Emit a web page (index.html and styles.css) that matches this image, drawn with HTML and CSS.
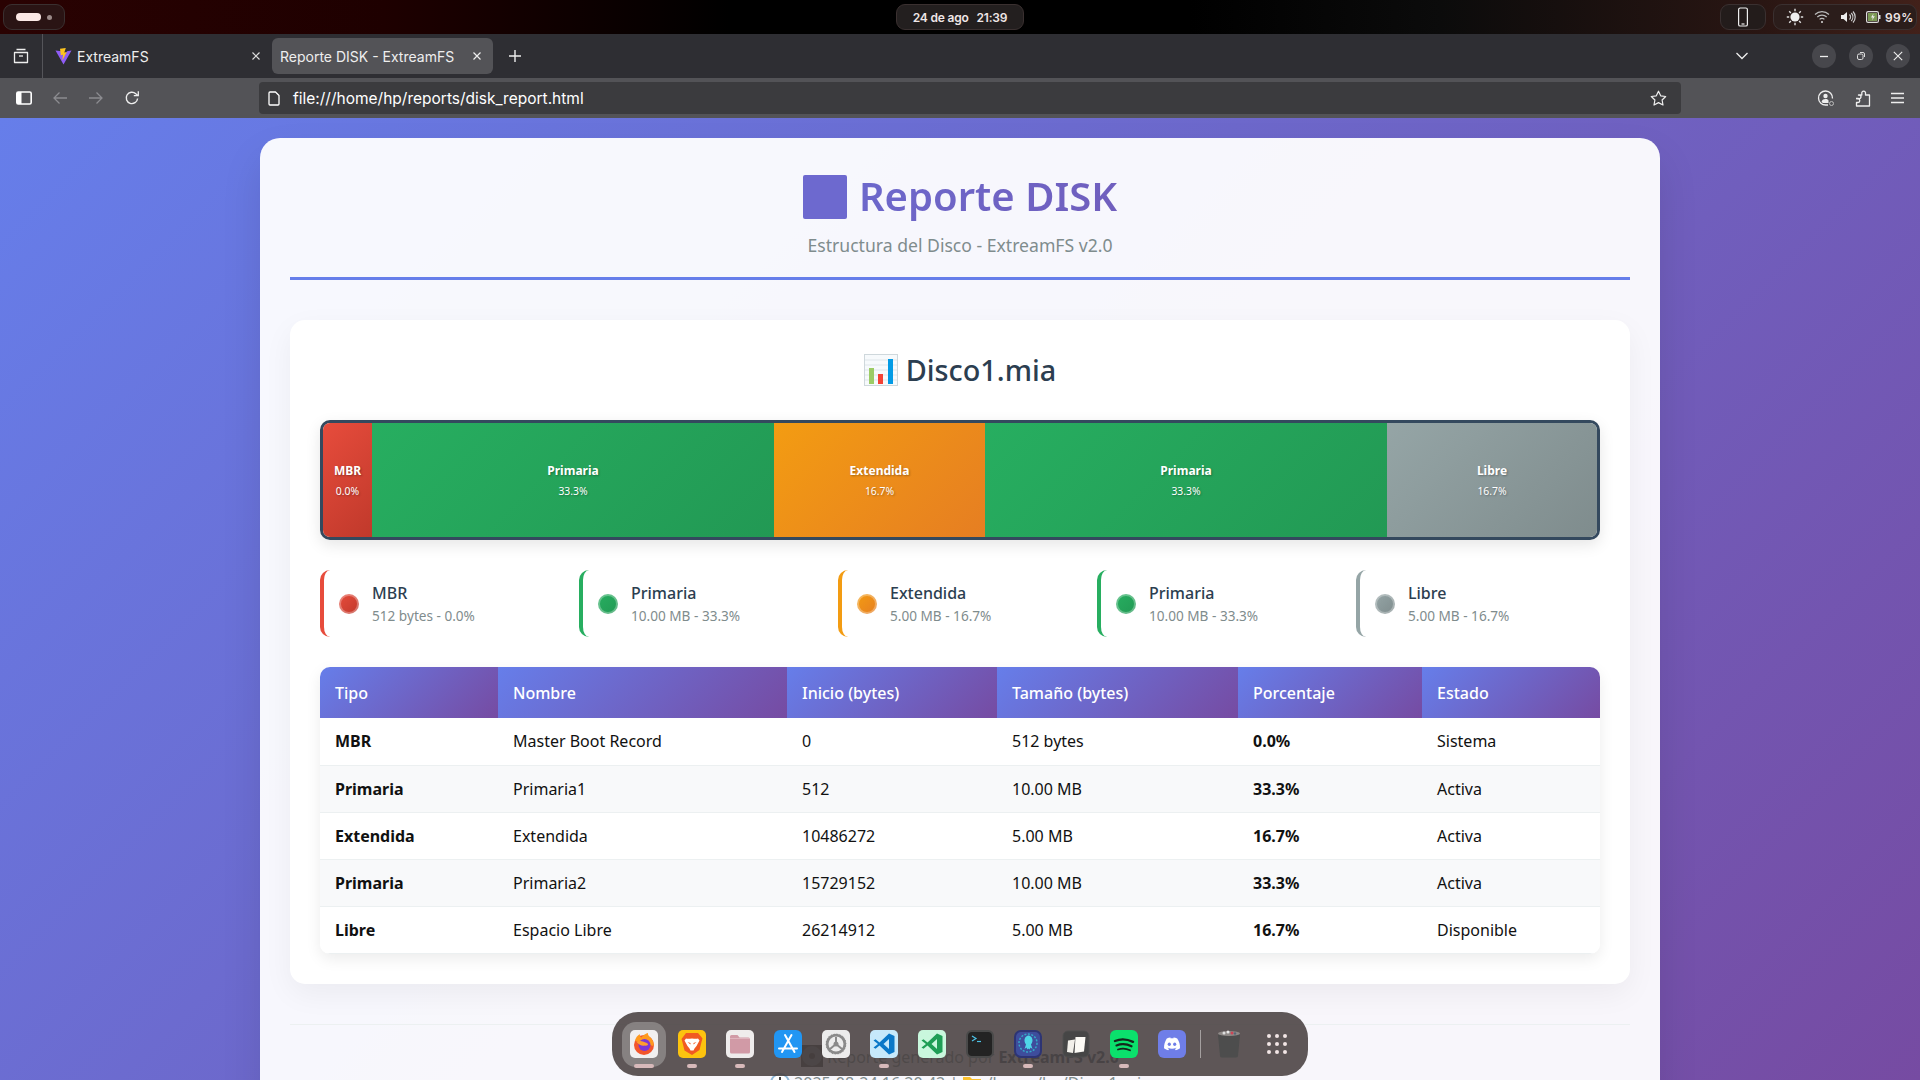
FILE: index.html
```html
<!DOCTYPE html>
<html lang="es">
<head>
<meta charset="utf-8">
<title>Reporte DISK - ExtreamFS</title>
<link rel="stylesheet" href="styles.css">
</head>
<body>
<div class="screen">
  <header class="topbar">
    <div class="pill pill-work"><span class="work-active"></span><span class="work-dot"></span></div>
    <div class="pill pill-clock"><span>24 de ago</span><span>21:39</span></div>
    <div class="top-right">
      <div class="pill pill-phone">
        <svg width="12" height="20" viewBox="0 0 12 20" fill="none" stroke="#eee" stroke-width="1.2"><rect x="1.6" y="1" width="8.8" height="18" rx="1.6"/><path d="M4.5 17h3"/></svg>
      </div>
      <div class="pill pill-status">
        <svg width="18" height="18" viewBox="0 0 18 18"><circle cx="9" cy="9" r="4.6" fill="#eee"/><g stroke="#ddd" stroke-width="1.4"><path d="M9 .8v2.4M9 14.8v2.4M.8 9h2.4M14.8 9h2.4M3.2 3.2l1.7 1.7M13.1 13.1l1.7 1.7M3.2 14.8l1.7-1.7M13.1 4.9l1.7-1.7"/></g></svg>
        <svg width="16" height="14" viewBox="0 0 16 14" fill="none" stroke="#bbb" stroke-width="1.2"><path d="M1 4.5a10 10 0 0 1 14 0M3.3 7a6.6 6.6 0 0 1 9.4 0M5.6 9.4a3.2 3.2 0 0 1 4.8 0"/><circle cx="8" cy="12" r="1" fill="#ddd" stroke="none"/></svg>
        <svg width="16" height="14" viewBox="0 0 16 14" fill="none" stroke="#ccc" stroke-width="1.2"><path d="M1 5h2.5L7 2v10L3.500 9H1z" fill="#eee" stroke="none"/><path d="M9.500 4.500a3.500 3.500 0 0 1 0 5M11.300 3a6 6 0 0 1 0 8M13 1.500a8 8 0 0 1 0 11"/></svg>
        <svg width="15" height="12" viewBox="0 0 15 12"><rect x=".6" y=".6" width="11.800" height="10.800" rx="1.500" fill="none" stroke="#ddd" stroke-width="1.200"/><rect x="2" y="2" width="9" height="8" fill="#7c9a55"/><path d="M7.500 2.500 5 6.500h1.800L6 9.500l2.800-4.200H7z" fill="#eee"/><rect x="13" y="4" width="1.500" height="4" fill="#ddd"/></svg>
        <span class="battery-text">99%</span>
      </div>
    </div>
  </header>

  <div class="tabbar">
    <button class="tb-btn tab-view">
      <svg width="16" height="16" viewBox="0 0 16 16" fill="none" stroke="#eee" stroke-width="1.300"><path d="M3.500 1.500h9M1.500 4.500h13v10h-13z" stroke-linejoin="round"/><path d="M6 8h4"/></svg>
    </button>
    <div class="tab">
      <svg class="favicon" width="17" height="17" viewBox="0 0 17 17"><path d="M.5 2.500 8.500 16.500 16.500 2.500 12 3.300 8.500 9 6.500 3.300z" fill="#8f5cf6"/><path d="M5 .8 10.800 0 9.300 4.500l2.500-.6L7.300 12.500 8 6.800 5.800 7.200z" fill="#fdc41f"/></svg>
      <span class="tab-title">ExtreamFS</span>
      <svg class="tab-x" width="10" height="10" viewBox="0 0 10 10" stroke="#ddd" stroke-width="1.200"><path d="M1.500 1.500l7 7M8.500 1.500l-7 7"/></svg>
    </div>
    <div class="tab tab-active">
      <span class="tab-title">Reporte DISK - ExtreamFS</span>
      <svg class="tab-x" width="10" height="10" viewBox="0 0 10 10" stroke="#eee" stroke-width="1.200"><path d="M1.500 1.500l7 7M8.500 1.500l-7 7"/></svg>
    </div>
    <svg class="tab-new" width="14" height="14" viewBox="0 0 14 14" stroke="#eee" stroke-width="1.400"><path d="M7 1v12M1 7h12"/></svg>
    <div class="tabbar-right">
      <svg class="chevron" width="14" height="8" viewBox="0 0 14 8" fill="none" stroke="#eee" stroke-width="1.300"><path d="M1.500 1 7 6.500 12.500 1"/></svg>
      <span class="win-btn"><svg width="10" height="10" viewBox="0 0 10 10" stroke="#eee" stroke-width="1.300"><path d="M1 5.500h8"/></svg></span>
      <span class="win-btn"><svg width="10" height="10" viewBox="0 0 10 10" fill="none" stroke="#ddd"><rect x="1.500" y="3" width="5.500" height="5.500" rx="1.500"/><path d="M4 1.500h3a1.500 1.500 0 0 1 1.500 1.500v3"/></svg></span>
      <span class="win-btn"><svg width="10" height="10" viewBox="0 0 10 10" stroke="#eee" stroke-width="1.100"><path d="M.8.800l8.400 8.400M9.200.800.800 9.200"/></svg></span>
    </div>
  </div>

  <nav class="toolbar">
    <svg class="tool-side" width="16" height="14" viewBox="0 0 16 14"><rect x=".8" y="1" width="14.400" height="12" rx="1.500" fill="none" stroke="#fff" stroke-width="1.600"/><rect x="1" y="1" width="4.500" height="12" fill="#fff"/></svg>
    <svg class="tool-back" width="16" height="14" viewBox="0 0 16 14" fill="none" stroke="#8c8c90" stroke-width="1.300"><path d="M15 7H2M7.500 1.500 2 7l5.500 5.500"/></svg>
    <svg class="tool-fwd" width="16" height="14" viewBox="0 0 16 14" fill="none" stroke="#8c8c90" stroke-width="1.300"><path d="M1 7h13M8.500 1.500 14 7l-5.500 5.500"/></svg>
    <svg class="tool-reload" width="16" height="16" viewBox="0 0 16 16" fill="none" stroke="#eee" stroke-width="1.400"><path d="M13.600 8.500A5.700 5.700 0 1 1 11.800 3.700L14 5.500"/><path d="M14.300 1.200v4.500H9.800" stroke-width="1.300"/></svg>
    <div class="urlbar">
      <svg width="12" height="15" viewBox="0 0 12 15" fill="none" stroke="#fff" stroke-width="1.300"><path d="M1 2a1 1 0 0 1 1-1h5.500L11 4.500V13a1 1 0 0 1-1 1H2a1 1 0 0 1-1-1z" stroke-linejoin="round"/></svg>
      <span class="url-text">file:///home/hp/reports/disk_report.html</span>
      <svg class="url-star" width="17" height="16" viewBox="0 0 17 16" fill="none" stroke="#eee" stroke-width="1.200"><path d="M8.500 1.200 10.700 5.800l5 .7-3.600 3.500.9 5-4.500-2.400L4 15l.9-5L1.300 6.500l5-.7z" stroke-linejoin="round"/></svg>
    </div>
    <div class="toolbar-right">
      <svg width="18" height="18" viewBox="0 0 18 18" fill="none" stroke="#eee" stroke-width="1.300"><path d="M15.500 9.500A7 7 0 1 0 9 16h2"/><circle cx="8.500" cy="7" r="2.200" fill="#eee" stroke="none"/><path d="M4.500 13c.6-2.400 2.200-3 4-3s2.500.5 3 1.500V14H6z" fill="#eee" stroke="none"/><circle cx="14.500" cy="14.500" r="2" stroke="#bbb" stroke-width="1"/></svg>
      <svg width="16" height="17" viewBox="0 0 16 17" fill="none" stroke="#eee" stroke-width="1.300"><path d="M1 8.500h2.500a1.800 1.800 0 1 0 0-3.300V5h3.300V3.500a1.900 1.900 0 1 1 3.700 0V5H14.500v11H1.500v-3.500h1.500a1.800 1.800 0 0 0 0-3.600H1.500" stroke-linejoin="round"/></svg>
      <svg width="13" height="12" viewBox="0 0 13 12" stroke="#eee" stroke-width="1.300"><path d="M0 1.500h13M0 6h13M0 10.500h13"/></svg>
    </div>
  </nav>

  <main class="page">
    <div class="container">
      <div class="report-header">
        <h1 class="report-title"><span class="disc-blank"></span>Reporte DISK</h1>
        <p class="report-sub">Estructura del Disco - ExtreamFS v2.0</p>
      </div>

      <section class="card">
        <h2 class="disk-name">
          <svg width="34" height="32" viewBox="0 0 34 32"><rect x=".5" y=".5" width="33" height="31" fill="#f7fafc" stroke="#cfd8dc"/><g stroke="#dfe6ea"><path d="M1 6h32M1 11h32M1 16h32M1 21h32M1 26h32"/></g><rect x="5" y="14" width="5" height="16" fill="#9ccc65"/><rect x="14" y="20" width="5" height="10" fill="#f44336"/><rect x="24" y="5" width="5" height="25" fill="#039be5"/></svg>
          <span>Disco1.mia</span>
        </h2>

        <div class="disk-bar">
          <div class="seg seg-mbr"><strong>MBR</strong><small>0.0%</small></div>
          <div class="seg seg-pri"><strong>Primaria</strong><small>33.3%</small></div>
          <div class="seg seg-ext"><strong>Extendida</strong><small>16.7%</small></div>
          <div class="seg seg-pri"><strong>Primaria</strong><small>33.3%</small></div>
          <div class="seg seg-free"><strong>Libre</strong><small>16.7%</small></div>
        </div>

        <div class="legend">
          <div class="legend-item li-mbr"><span class="dot seg-mbr"></span><div><div class="legend-name">MBR</div><div class="legend-info">512 bytes - 0.0%</div></div></div>
          <div class="legend-item li-pri"><span class="dot seg-pri"></span><div><div class="legend-name">Primaria</div><div class="legend-info">10.00 MB - 33.3%</div></div></div>
          <div class="legend-item li-ext"><span class="dot seg-ext"></span><div><div class="legend-name">Extendida</div><div class="legend-info">5.00 MB - 16.7%</div></div></div>
          <div class="legend-item li-pri"><span class="dot seg-pri"></span><div><div class="legend-name">Primaria</div><div class="legend-info">10.00 MB - 33.3%</div></div></div>
          <div class="legend-item li-free"><span class="dot seg-free"></span><div><div class="legend-name">Libre</div><div class="legend-info">5.00 MB - 16.7%</div></div></div>
        </div>

        <div class="table-wrap">
          <table class="parts">
            <colgroup><col class="c1"><col class="c2"><col class="c3"><col class="c4"><col class="c5"><col class="c6"></colgroup>
            <thead><tr><th>Tipo</th><th>Nombre</th><th>Inicio (bytes)</th><th>Tamaño (bytes)</th><th>Porcentaje</th><th>Estado</th></tr></thead>
            <tbody>
              <tr><td><strong>MBR</strong></td><td>Master Boot Record</td><td>0</td><td>512 bytes</td><td><strong>0.0%</strong></td><td>Sistema</td></tr>
              <tr><td><strong>Primaria</strong></td><td>Primaria1</td><td>512</td><td>10.00 MB</td><td><strong>33.3%</strong></td><td>Activa</td></tr>
              <tr><td><strong>Extendida</strong></td><td>Extendida</td><td>10486272</td><td>5.00 MB</td><td><strong>16.7%</strong></td><td>Activa</td></tr>
              <tr><td><strong>Primaria</strong></td><td>Primaria2</td><td>15729152</td><td>10.00 MB</td><td><strong>33.3%</strong></td><td>Activa</td></tr>
              <tr><td><strong>Libre</strong></td><td>Espacio Libre</td><td>26214912</td><td>5.00 MB</td><td><strong>16.7%</strong></td><td>Disponible</td></tr>
            </tbody>
          </table>
        </div>
      </section>

      <footer class="report-footer">
        <p class="foot-line"><svg width="22" height="22" viewBox="0 0 22 22"><rect width="22" height="22" fill="#444"/><circle cx="11" cy="11" r="10" fill="#6f7479"/><circle cx="11" cy="11" r="3" fill="#333"/></svg> Reporte generado por <strong>ExtreamFS v2.0</strong></p>
        <p class="foot-line"><svg width="20" height="20" viewBox="0 0 20 20"><circle cx="10" cy="10" r="9" fill="#fff" stroke="#8fb8d8" stroke-width="2"/><path d="M10 4v6h4" stroke="#444" stroke-width="2" fill="none"/></svg> 2025-08-24 16:20:42 | <svg width="20" height="18" viewBox="0 0 20 18"><path d="M1 2h7l2 2h9v13H1z" fill="#fbc02d"/></svg> /home/hp/Disco1.mia</p>
      </footer>
    </div>
  </main>

  <div class="dock">
    <div class="dock-item is-focus">
      <svg class="tile" viewBox="0 0 28 28"><rect width="28" height="28" rx="5" fill="#f1f0f0"/><circle cx="14" cy="15" r="10" fill="#f3562c"/><path d="M5 11C6 6 9 5 10 4c-.5 2 .5 3 1.500 3.500C13 5 16 3.500 18 3c-.5 2 1 3 3 5 2 2.500 3 5 2.500 8z" fill="#ff9a1f"/><circle cx="14.500" cy="15" r="6" fill="#7b35d6"/><path d="M6.500 12c3-1.500 6-1 9 .5 1 .5 2.500.5 2.500 2 0 1-2 1.500-3 1-2.500 1-6-.5-8.500-3.500z" fill="#ff9d2e"/></svg>
      <span class="run-mark run-wide"></span>
    </div>
    <div class="dock-item">
      <svg class="tile" viewBox="0 0 28 28"><rect width="28" height="28" rx="5" fill="#fcc30f"/><path d="M8 3h12l3 3.500 1.500 2-1 3.500-2 8L14 25l-7.500-4.500-2-8-1-3.500 1.500-2z" fill="#f15a22"/><path d="M8 8.500c2 .6 4 0 6 0s4 .6 6 0l1.500 2-3 5.500-2 2.500-1 2h-3l-1-2-2-2.500-3-5.500z" fill="#fff"/><path d="M9.500 12l3 1v1.500zM18.500 12l-3 1v1.500z" fill="#f15a22"/></svg>
      <span class="run-mark"></span>
    </div>
    <div class="dock-item">
      <svg class="tile" viewBox="0 0 28 28"><rect width="28" height="28" rx="5" fill="#efecec"/><path d="M4 6.500A1.500 1.500 0 0 1 5.500 5h6l2 2.500h9A1.500 1.500 0 0 1 24 9v13a1.500 1.500 0 0 1-1.500 1.500h-17A1.500 1.500 0 0 1 4 22z" fill="#d19aa6"/><path d="M4 8.500h20" stroke="#e3bdc5" stroke-width=".8"/></svg>
      <span class="run-mark"></span>
    </div>
    <div class="dock-item">
      <svg class="tile" viewBox="0 0 28 28"><rect width="28" height="28" rx="6" fill="#2196f3"/><g stroke="#fff" stroke-width="2" stroke-linecap="round"><path d="M17.500 5 8 22M11 5l9.500 17M5 18.500h18"/></g></svg>
    </div>
    <div class="dock-item">
      <svg class="tile" viewBox="0 0 28 28"><rect width="28" height="28" rx="5" fill="#ececec"/><circle cx="14" cy="14" r="10.500" fill="#8a8a8a"/><circle cx="14" cy="14" r="7.500" fill="#ececec"/><circle cx="14" cy="14" r="10.500" fill="none" stroke="#ececec" stroke-width="1" stroke-dasharray="1.500 1.500"/><g stroke="#8a8a8a" stroke-width="2"><path d="M14 14V7M14 14l-6 5M14 14l6 5"/></g><circle cx="14" cy="14" r="2.500" fill="#8a8a8a"/></svg>
    </div>
    <div class="dock-item">
      <svg class="tile" viewBox="0 0 28 28"><rect width="28" height="28" rx="5" fill="#c6e9fb"/><path d="M19 3.500 24.500 6v16L19 24.500 9.500 15.500l-4 3.200L3.500 17.500 8 14 3.500 10.500l2-1.200 4 3.200zM19 9l-5.500 5 5.500 5z" fill="#0a78c8"/></svg>
      <span class="run-mark"></span>
    </div>
    <div class="dock-item">
      <svg class="tile" viewBox="0 0 28 28"><rect width="28" height="28" rx="5" fill="#c9f7dd"/><path d="M19 3.500 24.500 6v16L19 24.500 9.500 15.500l-4 3.200L3.500 17.500 8 14 3.500 10.500l2-1.200 4 3.200zM19 9l-5.500 5 5.500 5z" fill="#1e9e55"/></svg>
    </div>
    <div class="dock-item">
      <svg class="tile" viewBox="0 0 28 28"><rect x="1" y="1" width="26" height="26" rx="5" fill="#232323" stroke="#4a4a4a" stroke-width="2"/><path d="M6 6l4 2.500L6 11" fill="none" stroke="#4cc4e8" stroke-width="1.200"/><path d="M11 11.500h4" stroke="#4cc4e8" stroke-width="1.200"/></svg>
    </div>
    <div class="dock-item">
      <svg class="tile" viewBox="0 0 28 28"><rect x="1" y="1" width="26" height="26" rx="6" fill="#3e4d9c" stroke="#2d3474" stroke-width="2"/><circle cx="14" cy="13" r="9" fill="none" stroke="#35a8c9" stroke-width="1.500" stroke-dasharray="2 1.500"/><path d="M14 5.500c3 0 4.500 2.500 4.500 5 0 2-1 3-1.500 4l1.500 4.500-2-1.500-1 2-1-1-1 1-1-2-2 1.500 1.500-4.500c-.5-1-1.500-2-1.500-4 0-2.500 1.500-5 4.500-5z" fill="#4fd6e8"/></svg>
      <span class="run-mark"></span>
    </div>
    <div class="dock-item">
      <svg class="tile" viewBox="0 0 28 28"><rect x="1" y="1" width="26" height="26" rx="5" fill="#464646" stroke="#4e4e4e"/><path d="M6 10.500 13 9.500 11 23 5 22z" fill="#f2f0ea"/><path d="M13.500 7h10l-1.500 14.500-9.500 1.500z" fill="#fbfaf5"/></svg>
    </div>
    <div class="dock-item">
      <svg class="tile" viewBox="0 0 28 28"><rect width="28" height="28" rx="6" fill="#0be06c"/><g fill="none" stroke="#14261b" stroke-linecap="round"><path d="M5 11c6-2.500 12-2 18 .8" stroke-width="2.400"/><path d="M6.500 15.500c5-2 10.500-1.500 15 .8" stroke-width="2.100"/><path d="M8 19.500c4-1.400 8.500-1 12 .8" stroke-width="1.800"/></g></svg>
      <span class="run-mark"></span>
    </div>
    <div class="dock-item">
      <svg class="tile" viewBox="0 0 28 28"><rect width="28" height="28" rx="6" fill="#6f7ee8"/><path d="M8.800 8.500C10 8 11.300 7.600 12.400 7.500l.4.900c.8-.1 1.600-.1 2.400 0l.4-.9c1.100.1 2.400.5 3.600 1 2 3 3 6 2.800 9.800-1.400 1-2.800 1.700-4.200 2l-.9-1.400c.6-.2 1.100-.5 1.600-.8l-.4-.3c-2.700 1.300-5.400 1.300-8.200 0l-.4.300c.5.300 1 .6 1.600.8l-.9 1.400c-1.400-.3-2.800-1-4.200-2C6 14.500 7 11.500 8.800 8.500z" fill="#fff"/><ellipse cx="11.300" cy="14.300" rx="1.600" ry="1.800" fill="#6f7ee8"/><ellipse cx="16.700" cy="14.300" rx="1.600" ry="1.800" fill="#6f7ee8"/></svg>
    </div>
    <span class="dock-sep"></span>
    <div class="dock-item">
      <svg class="tile" viewBox="0 0 28 28"><path d="M3 4.500 25 4.500 23 26a2 2 0 0 1-2 1.500H7A2 2 0 0 1 5 26z" fill="#4d4d4d"/><ellipse cx="14" cy="3.500" rx="11" ry="2.500" fill="#8f8a88"/><g><circle cx="9" cy="3" r="1.500" fill="#ddd"/><circle cx="13" cy="2" r="1.500" fill="#e8e8e8"/><circle cx="17" cy="3" r="1.500" fill="#c45"/><circle cx="20" cy="3.500" r="1.200" fill="#567"/></g></svg>
    </div>
    <div class="dock-item">
      <svg class="tile" viewBox="0 0 28 28" fill="#f3e6e6"><circle cx="6" cy="6" r="2"/><circle cx="14" cy="6" r="2"/><circle cx="22" cy="6" r="2"/><circle cx="6" cy="14" r="2"/><circle cx="14" cy="14" r="2"/><circle cx="22" cy="14" r="2"/><circle cx="6" cy="22" r="2"/><circle cx="14" cy="22" r="2"/><circle cx="22" cy="22" r="2"/></svg>
    </div>
  </div>
</div>
</body>
</html>
```
FILE: styles.css
```css
* { box-sizing: border-box; }
html, body { margin: 0; height: 100%; overflow: hidden; }
body { font-family: "Noto Sans", sans-serif; background: #000; }
p, h1, h2 { margin: 0; }
button { background: none; border: 0; padding: 0; }

.screen { height: 100vh; display: flex; flex-direction: column; overflow: hidden; position: relative; }

/* system bar */
.topbar {
  height: 34px; flex: none; display: flex; align-items: center; position: relative; padding: 0 3px;
  background: linear-gradient(90deg, #2a0202 0, #1e0000 20%, #000 38%, #000 62%, #0b0b0b 75%, #2a1613 92%, #42211a 100%);
  font-family: Inter, sans-serif; color: #efe6e6;
}
.pill { height: 26px; border-radius: 9px; background: #2b2020; border: 1px solid #3a3030; display: flex; align-items: center; }
.pill-work { width: 62px; padding-left: 12px; gap: 6px; background: #2a1414; }
.work-active { width: 25px; height: 8px; border-radius: 4px; background: #fbe9e6; }
.work-dot { width: 5px; height: 5px; border-radius: 50%; background: #9a8a88; }
.pill-clock {
  position: absolute; left: 896px; width: 128px; justify-content: center; gap: 8px;
  font-size: 12px; font-weight: 600; background: #231f1f; letter-spacing: -.2px;
}
.top-right { margin-left: auto; display: flex; gap: 7px; margin-right: 0; }
.pill-phone { width: 46px; justify-content: center; background: #231c1b; }
.pill-status { width: 144px; padding-left: 12px; gap: 10px; background: #2b1d1b; }
.battery-text { font-size: 12px; font-weight: 600; margin-left: -6px; letter-spacing: .4px; }

/* tabs */
.tabbar {
  height: 44px; flex: none; display: flex; align-items: center; background: #2e2e33;
  font-family: Inter, sans-serif; font-size: 14px; color: #eee;
}
.tb-btn { width: 43px; height: 44px; display: flex; align-items: center; justify-content: center; border-right: 1px solid #55555a; }
.tab { height: 36px; width: 229px; display: flex; align-items: center; padding-left: 12px; border-radius: 6px; }
.tab .tab-title { flex: 1; padding-left: 5px; }
.tab-active { width: 221px; padding-left: 8px; background: #535357; }
.tab-active .tab-title { padding-left: 0; }
.tab-x { margin-right: 11px; }
.tab-new { margin-left: 15px; }
.tabbar-right { margin-left: auto; display: flex; align-items: center; gap: 13px; padding-right: 10px; }
.chevron { margin-right: 50px; }
.win-btn { width: 24px; height: 24px; border-radius: 50%; background: #47474c; display: flex; align-items: center; justify-content: center; }

/* toolbar */
.toolbar {
  height: 40px; flex: none; display: flex; align-items: center; background: #535357; padding: 0 16px;
  font-family: Inter, sans-serif; color: #fff;
}
.tool-back { margin-left: 20px; }
.tool-fwd { margin-left: 20px; }
.tool-reload { margin-left: 20px; }
.urlbar {
  margin-left: 127px; height: 32px; width: 1422px; flex: none; background: #3b3b3e; border-radius: 4px;
  display: flex; align-items: center; padding: 0 14px 0 9px; gap: 13px; font-size: 15.500px;
}
.urlbar { margin-left: 119px; }
.url-text { flex: 1; }
.toolbar-right { margin-left: auto; display: flex; align-items: center; gap: 20px; }

/* page */
.page {
  flex: 1; min-height: 0; padding: 20px; overflow: hidden;
  background: linear-gradient(135deg, #667eea 0%, #764ba2 100%);
}
.container {
  width: 1400px; margin: 0 auto; background: rgba(255,255,255,.95); border-radius: 20px; padding: 30px;
  box-shadow: 0 20px 40px rgba(0,0,0,.1);
}
.report-header { text-align: center; border-bottom: 3px solid #667eea; padding-bottom: 20px; margin-bottom: 40px; }
.report-title {
  font-size: 40px; font-weight: 600; line-height: 55px; margin-bottom: 10px;
  background: linear-gradient(135deg, #667eea, #764ba2); -webkit-background-clip: text; background-clip: text; color: transparent;
}
.disc-blank { display: inline-block; width: 44px; height: 44px; margin-right: 12px; vertical-align: -8px; background: #6d69cf; border-radius: 2px; }
.report-sub { font-size: 17.600px; color: #7f8c8d; line-height: 24px; }

.card { background: #fff; border-radius: 15px; padding: 30px; box-shadow: 0 10px 30px rgba(0,0,0,.05); margin-bottom: 40px; }
.disk-name {
  display: flex; justify-content: center; align-items: center; gap: 8px; font-size: 28.800px; font-weight: 500; color: #2c3e50;
  line-height: 40px; margin-bottom: 30px;
}

.disk-bar {
  height: 120px; border: 3px solid #34495e; border-radius: 10px; overflow: hidden; display: grid;
  grid-template-columns: 49fr 402fr 211fr 402fr 210fr; box-shadow: 0 5px 15px rgba(0,0,0,.1); margin-bottom: 30px;
}
.seg { display: flex; flex-direction: column; align-items: center; justify-content: center; color: #fff; text-shadow: 1px 1px 2px rgba(0,0,0,.3); }
.seg strong { font-size: 12px; font-weight: 700; line-height: 16px; margin-bottom: 5px; }
.seg small { font-size: 10.400px; line-height: 14px; }
.seg-mbr { background: linear-gradient(135deg, #e74c3c, #c0392b); }
.seg-pri { background: linear-gradient(135deg, #27ae60, #229954); }
.seg-ext { background: linear-gradient(135deg, #f39c12, #e67e22); }
.seg-free { background: linear-gradient(135deg, #95a5a6, #7f8c8d); }

.legend { display: grid; grid-template-columns: repeat(5, 1fr); gap: 15px; margin-bottom: 30px; }
.legend-item { display: flex; align-items: center; gap: 13px; padding: 15px; border-left: 4px solid; border-radius: 10px; background: #fff; height: 67px; }
.li-mbr { border-color: #e74c3c; }
.li-pri { border-color: #27ae60; }
.li-ext { border-color: #f39c12; }
.li-free { border-color: #95a5a6; }
.dot { width: 20px; height: 20px; flex: none; border-radius: 50%; border: 2px solid rgba(255,255,255,.3); box-shadow: 0 0 0 0 transparent; background-origin: border-box; }
.legend-name { font-size: 16px; font-weight: 500; color: #2c3e50; line-height: 22px; }
.legend-info { font-size: 13.600px; color: #7f8c8d; line-height: 19px; margin-top: 2px; }

.table-wrap { border-radius: 10px; overflow: hidden; box-shadow: 0 5px 15px rgba(0,0,0,.08); }
.parts { width: 100%; border-collapse: collapse; table-layout: fixed; background: #fff; font-size: 16px; color: #111; }
.c1 { width: 178px; } .c2 { width: 289px; } .c3 { width: 210px; } .c4 { width: 241px; } .c5 { width: 184px; } .c6 { width: 178px; }
.parts th {
  text-align: left; color: #fff; font-weight: 500; padding: 0 15px; height: 51px;
  background: linear-gradient(135deg, #667eea, #764ba2);
}
.parts td { padding: 0 15px; height: 47px; border-bottom: 1px solid #ecf0f1; }
.parts tbody tr:nth-child(even) { background: #f8f9fa; }
.parts strong { font-weight: 700; }

.report-footer { border-top: 1px solid #ecf0f1; padding-top: 20px; text-align: center; color: #7f8c8d; font-size: 16px; }
.report-footer strong { color: #4a5a68; }
.foot-line { line-height: 24px; margin-bottom: 2px; }
.foot-line svg { vertical-align: -4px; }

/* dock */
.dock {
  position: fixed; left: 612px; top: 1012px; width: 696px; height: 64px; padding: 18px; border-radius: 26px;
  display: flex; gap: 20px; background: rgba(72,64,64,.88); box-shadow: 0 0 0 1px rgba(255,255,255,.02);
}
.dock-item { width: 28px; height: 28px; position: relative; flex: none; }
.tile { width: 28px; height: 28px; display: block; }
.is-focus::before { content: ""; position: absolute; inset: -8px -8px -9px; background: rgba(255,255,255,.25); border-radius: 14px; }
.is-focus .tile { position: relative; }
.run-mark { position: absolute; left: 9px; top: 34px; width: 10px; height: 4px; border-radius: 2px; background: #d7b9ba; }
.run-wide { left: 4px; width: 20px; }
.dock-sep { width: 1px; height: 28px; background: #a49f9f; margin: 0 -6px; flex: none; }
```
